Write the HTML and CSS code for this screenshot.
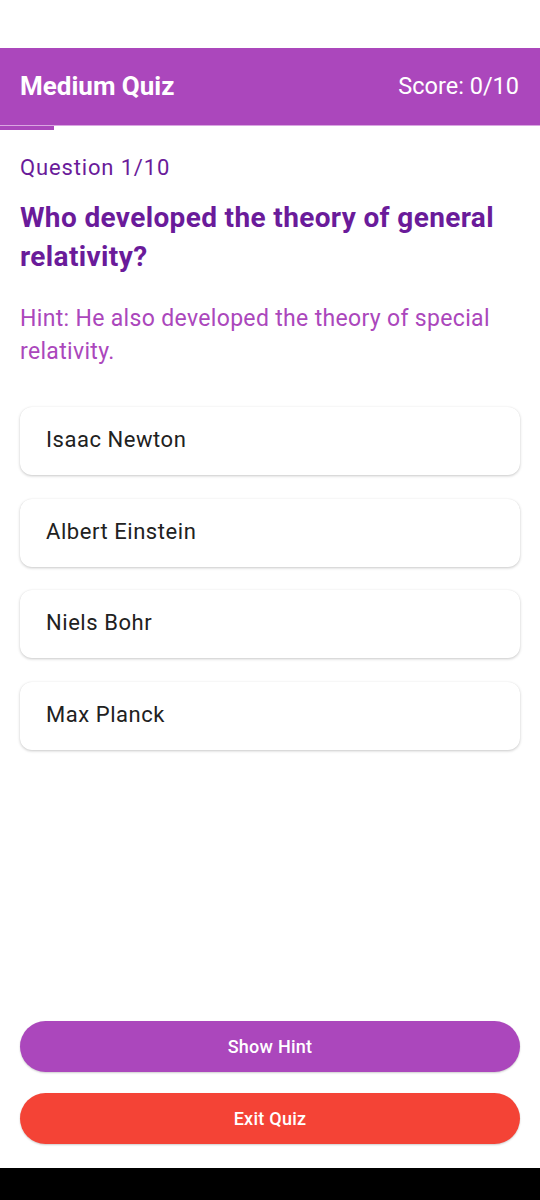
FILE: index.html
```html
<!DOCTYPE html>
<html lang="en">
<head>
<meta charset="utf-8">
<title>Medium Quiz</title>
<link rel="stylesheet" href="styles.css">
</head>
<body>
<div class="screen">
  <div class="statusbar"></div>
  <header class="appbar">
    <h1 class="title">Medium Quiz</h1>
    <span class="score">Score: 0/10</span>
  </header>
  <div class="progress"><div class="progress-fill" style="width:10%"></div></div>
  <main class="content">
    <p class="qnum">Question 1/10</p>
    <h2 class="question">Who developed the theory of general relativity?</h2>
    <p class="hint">Hint: He also developed the theory of special relativity.</p>
    <div class="options">
      <div class="option">Isaac Newton</div>
      <div class="option">Albert Einstein</div>
      <div class="option">Niels Bohr</div>
      <div class="option">Max Planck</div>
    </div>
    <div class="spacer"></div>
    <div class="actions">
      <button class="btn btn-hint">Show Hint</button>
      <button class="btn btn-exit">Exit Quiz</button>
    </div>
  </main>
  <div class="navbar"></div>
</div>
</body>
</html>
```
FILE: styles.css
```css
* { box-sizing: border-box; }
html, body { margin: 0; padding: 0; background: #fff; }
body { font-family: Roboto, "Noto Sans", "Liberation Sans", sans-serif; }
.screen { display: flex; flex-direction: column; height: 1200px; }
.statusbar { height: 48px; background: #fff; flex: none; }
.appbar {
  flex: none;
  height: 78px;
  background: #AB47BC;
  border-bottom: 1px solid #d9a6e1;
  display: flex;
  align-items: center;
  justify-content: space-between;
  padding: 0 21px 2px 20px;
}
.title { margin: 0; color: #fff; font-size: 26px; font-weight: 700; }
.score { color: #fff; font-size: 23.5px; font-weight: 400; }
.progress { flex: none; height: 4px; background: #fff; }
.progress-fill { height: 100%; background: #AB47BC; }
.content { flex: 1; display: flex; flex-direction: column; padding: 24px 20px 24px; }
.qnum { margin: 0; color: #6A1B9A; font-size: 22px; letter-spacing: 0.85px; line-height: 28px; }
.question { margin: 16px 0 0; color: #6A1B9A; font-size: 28px; letter-spacing: 0.36px; font-weight: 700; line-height: 39px; }
.hint { margin: 26px 0 0; color: #AB47BC; font-size: 23px; letter-spacing: 0.33px; line-height: 33px; }
.options { margin-top: 39px; display: flex; flex-direction: column; gap: 23.7px; }
.option {
  height: 68px;
  display: flex;
  align-items: center;
  padding: 0 26px 3px;
  background: #fff;
  border-radius: 12px;
  box-shadow: 0 1px 3px rgba(0,0,0,0.22), 0 0 1px rgba(0,0,0,0.06);
  color: #212121;
  font-size: 22px;
  letter-spacing: 0.55px;
}
.spacer { flex: 1; }
.actions { display: flex; flex-direction: column; gap: 21px; }
.btn {
  height: 51px;
  border: none;
  border-radius: 26px;
  color: #fff;
  font-family: Roboto, "Noto Sans", "Liberation Sans", sans-serif;
  font-size: 18px;
  letter-spacing: 0.25px;
  font-weight: 500;
  box-shadow: 0 1px 2px rgba(0,0,0,0.2);
}
.btn-hint { background: #AB47BC; }
.btn-exit { background: #F44336; }
.navbar { flex: none; height: 32px; background: #000; }
```
